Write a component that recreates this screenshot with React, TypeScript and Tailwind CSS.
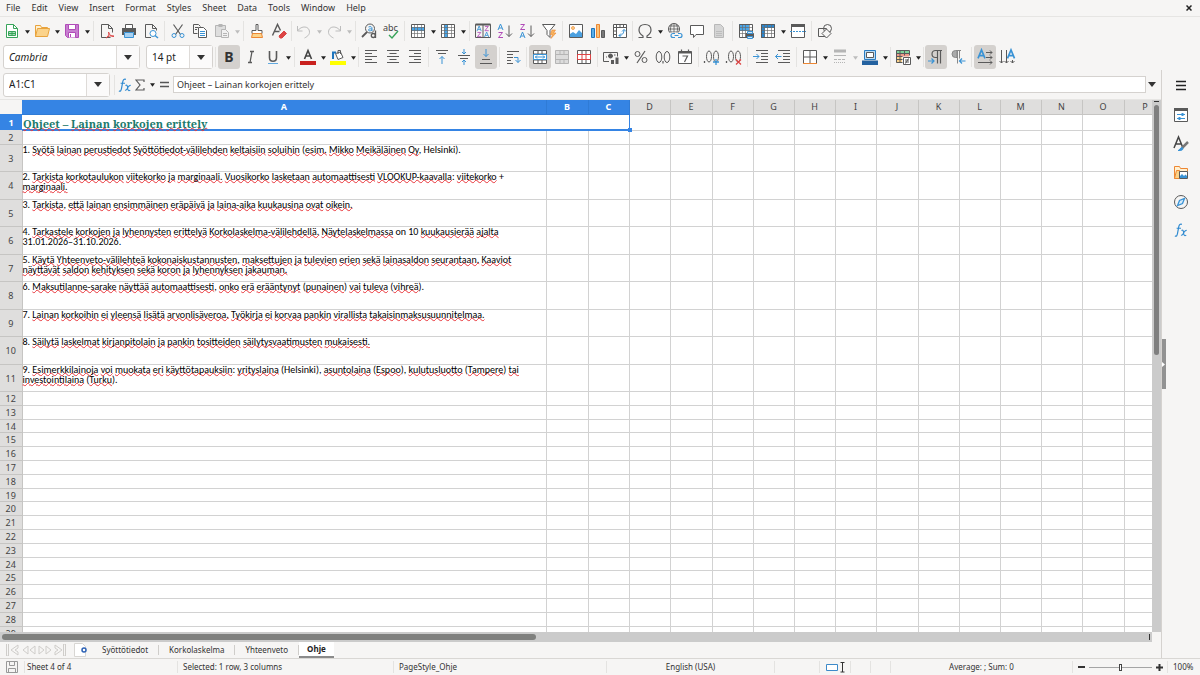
import React from "react";

type Kids = { children?: React.ReactNode };

const INK = "#5a5a5a";
const BLUE = "#3a93d5";
const RED = "#dc4444";
const ORANGE = "#ed8733";
const GREEN = "#38a45a";
const PURPLE = "#b14bb8";

function Svg({ children, size = 16 }: Kids & { size?: number }) {
  return (
    <svg width={size} height={size} viewBox="0 0 16 16" fill="none" stroke={INK} strokeWidth="1" aria-hidden="true" className="shrink-0 overflow-visible">
      {children}
    </svg>
  );
}

function Letter({ x, y, size, fill, children, bold }: { x: number; y: number; size: number; fill: string; children: string; bold?: boolean }) {
  return (
    <text x={x} y={y} fontSize={size} fill={fill} stroke="none" fontWeight={bold ? 700 : 400} fontFamily="'Noto Sans', sans-serif">
      {children}
    </text>
  );
}

function Peak({ x, y, scale = 1 }: { x: number; y: number; scale?: number }) {
  return <path transform={`translate(${x} ${y}) scale(${scale})`} d="M0 6L2.500 0 5 6M1 4h3" stroke={BLUE} strokeWidth={scale > 1.200 ? 1.200 : 1} />;
}

function Zig({ x, y }: { x: number; y: number }) {
  return <path transform={`translate(${x} ${y})`} d="M.5.500h4L.5 5.500H5" stroke={PURPLE} />;
}

const GridLines = () => (
  <>
    <path d="M4.500 1.500v13M7.500 1.500v13M11.500 1.500v13M1.500 4.500h13M1.500 7.500h13M1.500 10.500h13" stroke="#6a6a6a" strokeOpacity=".65" />
    <path d="M1.500 1.500h13v13h-13z" />
  </>
);

const icons: Record<string, React.ReactNode> = {
  New: (
    <Svg>
      <path d="M2.500 1.500h7l4 4v9h-11z" fill="#fff" stroke={GREEN} />
      <path d="M9.500 1.500v4h4" stroke={GREEN} />
      <path d="M4.500 8.500h7v4h-7zM4.500 10.500h7M8 8.500v4" stroke={GREEN} fill="#a8dfb8" />
    </Svg>
  ),
  Open: (
    <Svg>
      <path d="M1.500 13.500v-11h5l1 2h6v2" fill="#fff0d0" stroke="#e8a33d" />
      <path d="M1.500 13.500l2-8h12l-2 8z" fill="#fbd38b" stroke="#e8a33d" />
    </Svg>
  ),
  Save: (
    <Svg>
      <path d="M1.500 1.500h13v13h-11l-2-2z" fill="#c77fd0" stroke={PURPLE} />
      <path d="M4.500 1.500h7v5h-7zM4.500 14.500v-5h7v5" fill="#fff" stroke={PURPLE} />
      <path d="M6.500 11v3" stroke={PURPLE} />
    </Svg>
  ),
  "Export as PDF": (
    <Svg>
      <path d="M11.500 14.500h-9v-13h7l4 4v4M9.500 1.500v4h4" />
      <path d="M7 15c3-2 3-4 2.500-6M9.500 9c1 3 2.500 4.500 5.500 4.500M7 15c2-2 4.500-2.500 8-2" stroke={RED} />
    </Svg>
  ),
  Print: (
    <Svg>
      <path d="M4.500 1.500h7v4h-7z" fill="#fff" />
      <path d="M1 5h14v7h-2v-3H3v3H1z" fill={INK} stroke="none" />
      <path d="M3.500 9.500h9v5h-9z" fill="#a9d2f2" stroke={BLUE} />
    </Svg>
  ),
  "Print Preview": (
    <Svg>
      <path d="M8 14.500h-5.500v-13h7l4 4v2M9.500 1.500v4h4" />
      <circle cx="10" cy="10.500" r="3" stroke={BLUE} fill="#fff" />
      <path d="M12 12.500l3 2.500" stroke={BLUE} strokeWidth="1.500" />
    </Svg>
  ),
  Cut: (
    <Svg>
      <path d="M3.500 1.500l7 10M12.500 1.500l-7 10" strokeWidth="1.200" />
      <circle cx="4" cy="12.500" r="2" stroke={BLUE} />
      <circle cx="12" cy="12.500" r="2" stroke={BLUE} />
    </Svg>
  ),
  Copy: (
    <Svg>
      <path d="M5.500 10.500h-4v-9h5l2 2M3 4.500h3M3 6.500h2" />
      <path d="M6.500 4.500h5l3 3v7h-8z" fill="#fff" />
      <path d="M8 8.500h5M8 10.500h5M8 12.500h5" stroke={BLUE} />
    </Svg>
  ),
  Paste: (
    <Svg>
      <path d="M1.500 2.500h10v11h-10z" fill="#dedede" stroke="#b5b5b5" />
      <path d="M4.500 1h4v3h-4z" fill="#b5b5b5" stroke="none" />
      <path d="M7.500 6.500h4l3 3v5h-7zM9 10.500h4M9 12.500h4" fill="#f1f1f1" stroke="#b5b5b5" />
    </Svg>
  ),
  "Clone Formatting": (
    <Svg>
      <path d="M7 1.500h2v6h4v3H3v-3h4z" fill="#fff" />
      <path d="M3.500 10.500h9l1 4h-11z" fill="#fbd38b" stroke={ORANGE} />
    </Svg>
  ),
  "Clear Formatting": (
    <Svg>
      <path d="M1.500 12.500l5-11 3 6M3.500 8.500h5" strokeWidth="1.400" />
      <path d="M8 13l5-5 2.500 2.500-4.500 4.500h-2z" fill={RED} stroke={RED} />
    </Svg>
  ),
  Undo: (
    <Svg>
      <path d="M1.500 3v5h5M1.500 8c4-6 12-5 12 1 0 2-1 4-5 6" stroke="#bdbdbd" />
    </Svg>
  ),
  Redo: (
    <Svg>
      <path d="M14.500 3v5h-5M14.500 8c-4-6-12-5-12 1 0 2 1 4 5 6" stroke="#bdbdbd" />
    </Svg>
  ),
  "Find and Replace": (
    <Svg>
      <circle cx="9" cy="5.500" r="4.500" />
      <path d="M6 9l-5 5" strokeWidth="1.800" />
      <path d="M7.500 4c2.500-1 3.500 0 3.500 1.500V8M11 6c-2-.5-3.500 0-3.500 1S9 8.300 11 7" stroke={BLUE} />
      <path d="M14.500 7.500V15" strokeWidth="1.300" />
      <circle cx="12.300" cy="12.500" r="2" strokeWidth="1.300" />
    </Svg>
  ),
  Spelling: (
    <Svg>
      <Letter x={0} y={8} size={9} fill="#444">abc</Letter>
      <path d="M6 12l3 3 6-7" stroke={GREEN} strokeWidth="1.400" />
    </Svg>
  ),
  Row: (
    <Svg>
      <path d="M1 1h14v14H1z" fill="#fff" stroke="none" />
      <path d="M1 4h14v4H1z" fill="#4aa6e8" stroke="none" />
      <GridLines />
    </Svg>
  ),
  Column: (
    <Svg>
      <path d="M1 1h14v14H1z" fill="#fff" stroke="none" />
      <path d="M4 1h4v14H4z" fill="#4aa6e8" stroke="none" />
      <GridLines />
    </Svg>
  ),
  Sort: (
    <Svg>
      <path d="M.5 1.500h15v13H.5zM8 1.500v13" />
      <path d="M.5 1.500h15" strokeWidth="2" />
      <g transform="translate(2 3) scale(.85)"><Peak x={0} y={0} /></g>
      <g transform="translate(2 9) scale(.85)"><Zig x={0} y={0} /></g>
      <g transform="translate(9.500 3) scale(.85)"><Zig x={0} y={0} /></g>
      <g transform="translate(9.500 9) scale(.85)"><Peak x={0} y={0} /></g>
    </Svg>
  ),
  "Sort Ascending": (
    <Svg>
      <Peak x={1} y={1} />
      <Zig x={1} y={9} />
      <path d="M12 2.500v11M9 10.500l3 3 3-3" />
    </Svg>
  ),
  "Sort Descending": (
    <Svg>
      <Zig x={1} y={1} />
      <Peak x={1} y={9} />
      <path d="M12 2.500v11M9 10.500l3 3 3-3" />
    </Svg>
  ),
  AutoFilter: (
    <Svg>
      <path d="M1.500 1.500h12.500l-5 6v7l-3-3v-4z" fill="#fff" />
      <path d="M11 7h3.500l-2 3h2.500l-5 5.500 1.500-4H9.500z" fill="#f8b35c" stroke={ORANGE} strokeWidth=".6" />
    </Svg>
  ),
  Image: (
    <Svg>
      <path d="M1.500 1.500h13v13h-13z" fill="#fff" />
      <path d="M2 14v-3l3-2 3 2 3-4 3 3v4z" fill="#4aa0e0" stroke="none" />
      <circle cx="5" cy="5" r="1.500" fill="#fbd38b" stroke={ORANGE} strokeWidth=".7" />
    </Svg>
  ),
  Chart: (
    <Svg>
      <path d="M1.500 5.500h3v9h-3z" fill="#5aaee8" stroke="#1e75bd" />
      <path d="M6.500 1.500h3v13h-3z" fill="#f8c27a" stroke={ORANGE} />
      <path d="M11.500 7.500h3v7h-3z" fill="#777" stroke={INK} />
    </Svg>
  ),
  "Pivot Table": (
    <Svg>
      <path d="M1.500 1.500h13v13h-13z" fill="#fff" />
      <path d="M1.500 4.500h13M4.500 1.500v13M8 1.500v3M11.500 1.500v3M1.500 8h3M1.500 11.500h3" />
      <path d="M7 12.500c3 0 5-2 5-6M9 10.500l-2 2 2 2M10 8.500l2-2 2 2" stroke={BLUE} />
    </Svg>
  ),
  "Special Character": (
    <Svg>
      <path d="M1.500 14.500h4.500v-1.500c-3-2-4-4-4-6 0-3.500 2.500-5.500 6-5.500s6 2 6 5.500c0 2-1 4-4 6v1.500h4.500" strokeWidth="1.200" />
    </Svg>
  ),
  Hyperlink: (
    <Svg>
      <circle cx="7" cy="6" r="5.500" />
      <path d="M1.500 6h11M7 .5v11M5 1c-2 3-2 7 0 10M9 1c2 3 2 7 0 10M2.500 3h9M2.500 9h9" strokeWidth=".8" />
      <path d="M2.500 9.500h13.500v6.500h-13.500z" fill="#f6f5f4" stroke="none" />
      <path d="M8 10.500H6a2 2 0 000 4H8M11 10.500h2a2 2 0 010 4H11M7.500 12.500h4" stroke={BLUE} strokeWidth="1.200" />
    </Svg>
  ),
  Comment: (
    <Svg>
      <path d="M1.500 2.500h13v9H7l-2.500 3v-3h-3z" fill="#fff" />
    </Svg>
  ),
  "Headers and Footers": (
    <Svg>
      <path d="M3.500 1.500h6l3 3v10h-9z" fill="#d5d5d5" stroke="#b8b8b8" />
      <path d="M5 8.500h6M5 10.500h6M5 12.500h6" stroke="#bdbdbd" />
    </Svg>
  ),
  "Print Area": (
    <Svg>
      <path d="M1 1h14v14H1z" fill="#fff" stroke="none" />
      <path d="M1 1h10v7H1z" fill="#4aa6e8" stroke="none" />
      <GridLines />
      <path d="M8 10.500h7.500v4H8z" fill={INK} />
      <path d="M9.500 8.500h5v2h-5zM9.500 13.500h5v2h-5z" fill="#cfe6f8" stroke={BLUE} />
    </Svg>
  ),
  "Freeze Rows and Columns": (
    <Svg>
      <path d="M1 1h14v14H1z" fill="#fff" stroke="none" />
      <path d="M1 1h14v4H5v10H1z" fill="#2a86cf" stroke="none" />
      <GridLines />
    </Svg>
  ),
  "Split Window": (
    <Svg>
      <path d="M1.500 1.500h13v13h-13z" fill="#fff" />
      <path d="M1 2.500h14" strokeWidth="3" />
      <path d="M0 8.500h16" stroke={BLUE} strokeDasharray="2 1" />
    </Svg>
  ),
  Shapes: (
    <Svg>
      <path d="M1.500 5.500h8v8h-8z" />
      <circle cx="10.500" cy="5.500" r="4" />
      <path d="M9.500 6l4.500 4.500-4.500 4.500-4.500-4.500z" fill="#f6f5f4" />
    </Svg>
  ),
  Bold: <span className="text-[14px] leading-5 font-bold text-[#333]">B</span>,
  Italic: (
    <Svg>
      <path d="M7 2.500h4M5 13.500h4M9 2.500l-2 11" strokeWidth="1.300" />
    </Svg>
  ),
  Underline: (
    <Svg>
      <path d="M4.500 2v6.500c0 5 7 5 7 0V2" strokeWidth="1.600" />
      <path d="M3 14.500h10" stroke="#62a9df" />
    </Svg>
  ),
  "Font Color": (
    <Svg>
      <path d="M4.500 10l3.500-8.500L11.500 10M5.800 7h4.400" strokeWidth="1.600" stroke="#444" />
      <path d="M0 12h16v4H0z" fill="#c9211e" stroke="none" />
    </Svg>
  ),
  "Highlight Color": (
    <Svg>
      <path d="M5.500 4.500l5-1.500 2.500 5.500-5 2z" fill="#fff" />
      <path d="M8 5V1.500h2.500V5" />
      <path d="M6 3.500H3V10" stroke="#1e75bd" strokeWidth="2" />
      <path d="M0 12h16v4H0z" fill="#ffff00" stroke="none" />
    </Svg>
  ),
  "Align Left": <Svg><path d="M2 1.500h12M2 4.500h7M2 7.500h12M2 10.500h7M2 13.500h12" /></Svg>,
  "Center Horizontally": <Svg><path d="M2 1.500h12M4.500 4.500h7M2 7.500h12M4.500 10.500h7M2 13.500h12" /></Svg>,
  "Align Right": <Svg><path d="M2 1.500h12M7 4.500h7M2 7.500h12M7 10.500h7M2 13.500h12" /></Svg>,
  "Align Top": (
    <Svg>
      <path d="M2 1.500h12M4 4.500h8" />
      <path d="M8 15V7.500M5.500 10L8 7.500l2.500 2.500" stroke={BLUE} />
    </Svg>
  ),
  "Center Vertically": (
    <Svg>
      <path d="M2 6.500h12M4 9.500h8" />
      <path d="M8 0v5M6 3l2 2 2-2M8 16v-5M6 13l2-2 2 2" stroke={BLUE} />
    </Svg>
  ),
  "Align Bottom": (
    <Svg>
      <path d="M4 10.500h8M2 14.500h12" />
      <path d="M8 0v7.500M5.500 5L8 7.500 10.500 5" stroke={BLUE} />
    </Svg>
  ),
  "Wrap Text": (
    <Svg>
      <path d="M2 2.500h12M2 5.500h6M2 8.500h6M2 11.500h4M2 14.500h6" />
      <path d="M9 8.500h4v5M10.500 11l2.500 2.500 2.500-2.500" stroke={BLUE} />
    </Svg>
  ),
  "Merge and Center Cells": (
    <Svg>
      <path d="M1.500 1.500h13v13h-13z" fill="#fff" />
      <path d="M1.500 5h13M1.500 11h13M6 1.500v3.500M10 1.500v3.500M6 11v3.500M10 11v3.500" />
      <path d="M1.500 5.500h13v5h-13z" fill="#fff" stroke={BLUE} />
      <path d="M3 8h10M5 6.500L3.500 8 5 9.500M11 6.500L12.500 8 11 9.500" stroke={BLUE} />
    </Svg>
  ),
  "Merge Cells": (
    <Svg>
      <path d="M1.500 1.500h13v13h-13zM1.500 5.500h13M1.500 10.500h13M6 1.500v4M10 1.500v4M6 10.500v4M10 10.500v4" fill="#dcdcdc" stroke="#b5b5b5" />
    </Svg>
  ),
  "Split Cells": (
    <Svg>
      <path d="M1.500 1.500h13v13h-13z" fill="#fff" />
      <path d="M6 1.500v4M10 1.500v4M6 10.500v4M10 10.500v4" />
      <path d="M1.500 5.500h13v5h-13zM6 5.500v5M10 5.500v5" stroke={RED} />
    </Svg>
  ),
  Currency: (
    <Svg>
      <path d="M6 12.500H.5v-9h14v4" />
      <circle cx="7.500" cy="7" r="2" fill={INK} />
      <path d="M3 8h1M11 6h1.500" />
      <path d="M8 11h3v4H8zM12.500 8.500h3V15h-3z" fill={INK} stroke="none" />
    </Svg>
  ),
  Percent: (
    <Svg>
      <circle cx="4.500" cy="5" r="2.500" />
      <circle cx="11.500" cy="11" r="2.500" />
      <path d="M12 2L4 14" strokeWidth="1.200" />
    </Svg>
  ),
  Number: (
    <Svg>
      <ellipse cx="4" cy="8" rx="2.800" ry="5.500" />
      <ellipse cx="12" cy="8" rx="2.800" ry="5.500" />
      <path d="M8 12v2.500" strokeWidth="1.200" />
    </Svg>
  ),
  Date: (
    <Svg>
      <path d="M1.500 2.500h13v12h-13z" fill="#fff" />
      <path d="M1.500 3.500h13" strokeWidth="2" />
      <path d="M4.500.5v3M11.500.5v3M5.500 7h5l-3 6" strokeWidth="1.200" />
    </Svg>
  ),
  "Add Decimal Place": (
    <Svg>
      <path d="M.5 12v2" strokeWidth="1.300" />
      <ellipse cx="5" cy="7.500" rx="2.500" ry="5.500" />
      <ellipse cx="12" cy="7.500" rx="2.500" ry="5.500" />
      <path d="M12 10v6M9 13h6" stroke={BLUE} strokeWidth="1.300" />
    </Svg>
  ),
  "Delete Decimal Place": (
    <Svg>
      <path d="M.5 12v2" strokeWidth="1.300" />
      <ellipse cx="5" cy="7.500" rx="2.500" ry="5.500" />
      <ellipse cx="12" cy="7.500" rx="2.500" ry="5.500" />
      <path d="M10 10.500l5 5M15 10.500l-5 5" stroke={RED} strokeWidth="1.200" />
    </Svg>
  ),
  "Increase Indent": (
    <Svg>
      <path d="M3 1.500h12M8 4.500h7M8 7.500h7M8 10.500h7M3 13.500h12" />
      <path d="M0 7.500h6M3.500 5L6 7.500 3.500 10" stroke={BLUE} />
    </Svg>
  ),
  "Decrease Indent": (
    <Svg>
      <path d="M3 1.500h12M8 4.500h7M8 7.500h7M8 10.500h7M3 13.500h12" />
      <path d="M6.500 7.500h-6M3 5L.5 7.500 3 10" stroke={BLUE} />
    </Svg>
  ),
  Borders: (
    <Svg>
      <path d="M1.500 1.500h13v13h-13zM8 1.500v13M1.500 8h13" fill="#fff" />
      <path d="M1 14.500h14" stroke={ORANGE} />
    </Svg>
  ),
  "Border Style": (
    <Svg>
      <path d="M2 2h12" strokeWidth="3" stroke="#b5b5b5" />
      <path d="M2 6.500h12" stroke="#b5b5b5" />
      <path d="M2 10.500h12" stroke="#b5b5b5" strokeDasharray="3 1" />
      <path d="M2 13.500h12" stroke="#b5b5b5" strokeDasharray="1 1" />
    </Svg>
  ),
  "Background Color": (
    <Svg>
      <path d="M2.500 1.500h11v9h-11z" fill="#bcdcf5" stroke="#2a7cc2" />
      <path d="M4.500 3.500h7v5h-7z" fill="#fff" />
      <path d="M0 11.500h16V16H0z" fill="#2462a0" stroke="none" />
    </Svg>
  ),
  Conditional: (
    <Svg>
      <path d="M1 1h13v3H1z" fill="#7ed39a" stroke="none" />
      <path d="M1 4h13v3.500H1z" fill="#f09a8a" stroke="none" />
      <path d="M1 8h6v6H1z" fill="#fbd38b" stroke="none" />
      <path d="M1.500 1.500h13v5M1.500 1.500v12h6M1.500 4.500h13M1.500 7.500h6M1.500 10.500h6M5 1.500v12M9.500 1.500v5" />
      <path d="M8.500 8.500h7v7h-7z" fill="#fff" />
      <path d="M10 11h4M10 13h4M13.500 9.500l-3 5" />
    </Svg>
  ),
  "Left-To-Right": (
    <Svg>
      <path d="M14 1.500H7.500a3.500 3.500 0 000 7H9M9.500 1.500v13M12.500 1.500v13" strokeWidth="1.200" />
      <path d="M0 12h5.500M3.500 9.500L6 12l-2.500 2.500" stroke={BLUE} strokeWidth="1.200" />
    </Svg>
  ),
  "Right-To-Left": (
    <Svg>
      <path d="M7 1.500H5.500a3.500 3.500 0 000 7H7z" fill="#aaa" stroke="#888" />
      <path d="M7 1.500h4M7.500 1.500v13M9.500 1.500v8" stroke="#888" />
      <path d="M15.500 12H10M12 9.500L9.500 12l2.500 2.500" stroke={BLUE} strokeWidth="1.200" />
    </Svg>
  ),
  "Text direction left to right": (
    <Svg>
      <Peak x={1} y={1} scale={1.400} />
      <path d="M9 3.500h6M9 8.500h6M1 13.500h14M13 1.500l2 2-2 2M13 6.500l2 2-2 2M13 11.500l2 2-2 2" />
    </Svg>
  ),
  "Text direction top to bottom": (
    <Svg>
      <Peak x={8.500} y={1} scale={1.400} />
      <path d="M2.500 1v13M7.500 1v13M13.500 11v3M.5 12l2 2 2-2M5.500 12l2 2 2-2M11.500 12l2 2 2-2" />
    </Svg>
  ),
};

function Arrow({ dim }: { dim?: boolean }) {
  return (
    <svg width="5" height="4" viewBox="0 0 6 4" aria-hidden="true">
      <path d="M0 0h6L3 4z" fill={dim ? "#bdbdbd" : "#222"} />
    </svg>
  );
}

function BigArrow() {
  return (
    <svg width="8" height="5" viewBox="0 0 8 5" aria-hidden="true">
      <path d="M0 0h8L4 5z" fill="#333" />
    </svg>
  );
}

// "|" separator, "'" narrow separator, "name" button, "name+" button with menu,
// leading "!" is a pressed button and leading "~" a disabled one.
const standardBar = [
  "New+", "Open+", "Save+", "|", "Export as PDF", "Print", "Print Preview", "|", "Cut", "Copy", "~Paste+", "|",
  "Clone Formatting", "Clear Formatting", "'", "~Undo+", "~Redo+", "|", "Find and Replace", "Spelling", "|",
  "Row+", "Column+", "|", "Sort", "Sort Ascending", "Sort Descending", "AutoFilter", "|", "Image", "Chart",
  "Pivot Table", "'", "Special Character+", "Hyperlink", "Comment", "~Headers and Footers", "|", "Print Area",
  "Freeze Rows and Columns+", "Split Window", "|", "Shapes",
];

const formattingBar = [
  "!Bold", "Italic", "Underline+", "|", "Font Color+", "Highlight Color+", "'", "Align Left", "Center Horizontally",
  "Align Right", "|", "Align Top", "Center Vertically", "!Align Bottom", "|", "Wrap Text", "|",
  "!Merge and Center Cells", "~Merge Cells", "Split Cells", "|", "Currency+", "Percent", "Number", "Date", "|",
  "Add Decimal Place", "Delete Decimal Place", "|", "Increase Indent", "Decrease Indent", "|", "Borders+",
  "~Border Style+", "Background Color+", "'", "Conditional+", "'", "!Left-To-Right", "Right-To-Left", "|",
  "!Text direction left to right", "Text direction top to bottom",
];

function Tools({ items }: { items: string[] }) {
  return (
    <>
      {items.map((raw, i) => {
        if (raw === "|") return <span key={i} className="flex h-5 w-[5px] shrink-0 justify-center"><i className="w-px bg-[#e4e3e1]" /></span>;
        if (raw === "'") return <span key={i} className="flex h-5 w-[3px] shrink-0 justify-center"><i className="w-px bg-[#e4e3e1]" /></span>;
        const pressed = raw.startsWith("!");
        const dim = raw.startsWith("~");
        const name = raw.replace(/^[!~]/, "").replace(/\+$/, "");
        return (
          <React.Fragment key={i}>
            <button
              aria-label={name}
              aria-pressed={pressed || undefined}
              disabled={dim}
              className={
                pressed
                  ? "flex h-6 w-[22px] shrink-0 items-center justify-center rounded-[3px] bg-[#d4d1ce]"
                  : "flex h-6 w-[22px] shrink-0 items-center justify-center rounded-[3px]"
              }
            >
              {icons[name]}
            </button>
            {raw.endsWith("+") && (
              <button aria-label={`${name} options`} disabled={dim} className="flex h-6 w-2 shrink-0 items-center justify-center pt-[2px]">
                <Arrow dim={dim} />
              </button>
            )}
          </React.Fragment>
        );
      })}
    </>
  );
}

function Combo({ label, value, width, italic }: { label: string; value: string; width: string; italic?: boolean }) {
  return (
    <div className={`${width} flex h-6 shrink-0 rounded-[3px] border border-[#d5d2cf] bg-white`}>
      <input
        aria-label={label}
        defaultValue={value}
        className={italic ? "min-w-0 flex-1 bg-transparent px-[5px] text-[10px] text-[#222] italic outline-none" : "min-w-0 flex-1 bg-transparent px-[5px] text-[10px] text-[#222] outline-none"}
      />
      <button aria-label={`${label} list`} className="flex w-[23px] items-center justify-center border-l border-[#dedbd8] bg-[#fbfafa]">
        <BigArrow />
      </button>
    </div>
  );
}

const columns: [string, number][] = [
  ["A", 524], ["B", 42], ["C", 41], ["D", 41], ["E", 42], ["F", 41], ["G", 41], ["H", 41], ["I", 41], ["J", 42],
  ["K", 41], ["L", 41], ["M", 41], ["N", 41], ["O", 42], ["P", 42],
];

const rowHeights = [
  16, 14, 27, 28, 27, 28, 27, 28, 27, 28, 27, 14, 14, 13, 14, 14, 14, 14, 13, 14, 14, 14, 14, 13, 14, 14, 14, 14, 14,
];

const notes: Record<number, string> = {
  3: "1. Syötä lainan perustiedot Syöttötiedot-välilehden keltaisiin soluihin (esim. Mikko Meikäläinen Oy, Helsinki).",
  4: "2. Tarkista korkotaulukon viitekorko ja marginaali. Vuosikorko lasketaan automaattisesti VLOOKUP-kaavalla: viitekorko + marginaali.",
  5: "3. Tarkista, että lainan ensimmäinen eräpäivä ja laina-aika kuukausina ovat oikein.",
  6: "4. Tarkastele korkojen ja lyhennysten erittelyä Korkolaskelma-välilehdellä. Näytelaskelmassa on 10 kuukausierää ajalta 31.01.2026–31.10.2026.",
  7: "5. Käytä Yhteenveto-välilehteä kokonaiskustannusten, maksettujen ja tulevien erien sekä lainasaldon seurantaan. Kaaviot näyttävät saldon kehityksen sekä koron ja lyhennyksen jakauman.",
  8: "6. Maksutilanne-sarake näyttää automaattisesti, onko erä erääntynyt (punainen) vai tuleva (vihreä).",
  9: "7. Lainan korkoihin ei yleensä lisätä arvonlisäveroa. Työkirja ei korvaa pankin virallista takaisinmaksusuunnitelmaa.",
  10: "8. Säilytä laskelmat kirjanpitolain ja pankin tositteiden säilytysvaatimusten mukaisesti.",
  11: "9. Esimerkkilainoja voi muokata eri käyttötapauksiin: yrityslaina (Helsinki), asuntolaina (Espoo), kulutusluotto (Tampere) tai investointilaina (Turku).",
};

const known = new Set(["Helsinki", "on"]);

function Spelled({ text }: { text: string }) {
  return (
    <>
      {text.split(/([A-Za-zÄÖäö]+(?:-[A-Za-zÄÖäö]+)*\.?)/).map((part, i) =>
        i % 2 && !known.has(part) ? (
          <span key={i} className="underline decoration-[#e8353a] decoration-wavy decoration-1 underline-offset-[-1px] [text-decoration-skip-ink:none]">
            {part}
          </span>
        ) : (
          part
        ),
      )}
    </>
  );
}

function Sheet() {
  return (
    <table className="w-max table-fixed border-collapse bg-white">
      <colgroup>
        <col className="w-[22px]" />
        {columns.map(([name, width]) => (
          <col key={name} style={{ width }} />
        ))}
      </colgroup>
      <thead>
        <tr className="h-[14px]">
          <th className="bg-[#f6f5f4] p-0" />
          {columns.map(([name], i) => (
            <th
              key={name}
              scope="col"
              className={
                i < 3
                  ? "border-r border-b border-[#2f7bd6] bg-[#3584e4] p-0 text-[9px] leading-[13px] font-bold text-white"
                  : "border-r border-b border-[#c6c5c3] bg-[#dfdedd] p-0 text-[9px] leading-[13px] font-normal text-[#444]"
              }
            >
              {name}
            </th>
          ))}
        </tr>
      </thead>
      <tbody>
        {rowHeights.map((height, r) => {
          const row = r + 1;
          return (
            <tr key={row} style={{ height }}>
              <th
                scope="row"
                className={
                  row === 1
                    ? "bg-[#3584e4] p-0 text-[9px] leading-[11px] font-bold text-white"
                    : "border-r border-b border-[#c6c5c3] bg-[#dfdedd] p-0 pt-px text-[9px] leading-[11px] font-normal text-[#444]"
                }
              >
                {row}
              </th>
              {row === 1 && (
                <td colSpan={3} className="relative border-r border-b-2 border-[#3584e4] p-0 align-top font-['Noto_Serif','DejaVu_Serif_Condensed','DejaVu_Serif',serif] text-[11px] font-bold whitespace-nowrap text-[#1b7a6c]">
                  <div className="h-[13px] pl-px leading-[17px]">
                    <Spelled text="Ohjeet – Lainan korkojen erittely" />
                  </div>
                  <span className="absolute -right-[3px] -bottom-[3px] size-1 bg-[#3584e4]" />
                </td>
              )}
              {columns.slice(row === 1 ? 3 : 0).map(([name]) => (
                <td key={name} className="border-r border-b border-[#d2d2d2] p-0 align-top font-[Carlito,Lato,sans-serif] text-[10px] leading-[10px] text-black">
                  {name === "A" && notes[row] ? <Spelled text={notes[row]} /> : null}
                </td>
              ))}
            </tr>
          );
        })}
      </tbody>
    </table>
  );
}

function FxIcon() {
  return (
    <Svg size={14}>
      <path d="M1 15c2 .5 2.500-.5 3-3L5.500 4C6 1.500 7 1 9 1.500M3 6h5" stroke="#2f8ad0" strokeWidth="1.400" />
      <path d="M8.500 8.500c2-1 2 0 2.500 3s1 3.500 3 2.500M14.500 8.500c-2-.5-2.500 1-3.500 3s-1.500 3-3 2.500" stroke="#2f8ad0" strokeWidth="1.200" />
    </Svg>
  );
}

const sidebar: [string, React.ReactNode][] = [
  ["Sidebar Settings", <Svg><path d="M3 3.500h10M3 7.500h10M3 11.500h10" stroke="#222" strokeWidth="1.500" /></Svg>],
  ["Properties", <Svg><path d="M1.500 1.500h13v13h-13z" fill="#fff" /><path d="M1 2.500h14" strokeWidth="3" /><path d="M4 7.500h8M4 11.500h8" stroke={BLUE} /><path d="M9.500 6v3M6.500 10v3" stroke={BLUE} strokeWidth="2" /></Svg>],
  ["Styles", <Svg><path d="M1 12l4.500-11L10 12M3 8h5" strokeWidth="1.500" stroke="#444" /><path d="M15 6l-6 6" strokeWidth="2.500" stroke="#777" /><path d="M5 14.500c2 0 2-3 4-3 2 1 1 3.500-4 3z" fill={BLUE} stroke={BLUE} /></Svg>],
  ["Gallery", <Svg><path d="M1.500 13.500v-12h5l1 2h7v3" fill="#fff0d0" stroke={ORANGE} /><path d="M1.500 13.500l2-8h3v8z" fill="#fbd38b" stroke={ORANGE} /><path d="M6.500 6.500h8v7h-8z" fill="#fff" /><path d="M7 13v-2l2-2 2 2 1.500-1.500L14 11v2z" fill={BLUE} stroke="none" /></Svg>],
  ["Navigator", <Svg><circle cx="8" cy="8" r="6.500" /><path d="M11.500 4.500l-2 5-5 2 2-5z" fill="#d7ebfa" stroke={BLUE} strokeWidth="1.300" /></Svg>],
  ["Functions", <FxIcon />],
];

const tabs = ["Syöttötiedot", "Korkolaskelma", "Yhteenveto", "Ohje"];

export default function App() {
  return (
    <div className="flex h-screen flex-col overflow-hidden bg-[#f6f5f4] font-['Noto_Sans',sans-serif] text-[#333]">
      <header className="flex h-[17px] shrink-0 items-center border-b border-[#e6e5e3] pl-[6px] text-[9px] leading-3">
        <nav className="flex flex-1 gap-[11px]">
          {["File", "Edit", "View", "Insert", "Format", "Styles", "Sheet", "Data", "Tools", "Window", "Help"].map((m) => (
            <button key={m}>{m}</button>
          ))}
        </nav>
        <button aria-label="Close document" className="flex w-[22px] items-center justify-center">
          <svg width="6" height="6" viewBox="0 0 6 6" stroke="#222" strokeWidth="1.500" aria-hidden="true">
            <path d="M.5.5l5 5M5.500.5l-5 5" />
          </svg>
        </button>
      </header>

      <div role="toolbar" aria-label="Standard" className="flex h-[27px] shrink-0 items-center pl-px">
        <Tools items={standardBar} />
      </div>
      <div role="toolbar" aria-label="Formatting" className="flex h-[26px] shrink-0 items-center pl-[3px]">
        <Combo label="Font Name" value="Cambria" width="w-[137px]" italic />
        <span className="w-[6px] shrink-0" />
        <Combo label="Font Size" value="14 pt" width="w-[67px]" />
        <span className="flex h-5 w-[5px] shrink-0 justify-center"><i className="w-px bg-[#e4e3e1]" /></span>
        <Tools items={formattingBar} />
      </div>

      <div className="flex min-h-0 flex-1">
        <main className="flex min-w-0 flex-1 flex-col">
          <div className="flex h-[30px] shrink-0 items-center border-b border-[#e6e5e3] pl-[3px]">
            <Combo label="Name Box" value="A1:C1" width="w-[107px]" />
            <span className="flex h-5 w-2 shrink-0 justify-center"><i className="w-px bg-[#e4e3e1]" /></span>
            <button aria-label="Function Wizard" className="flex w-[14px] shrink-0 justify-center"><FxIcon /></button>
            <button aria-label="Select Function" className="flex w-4 shrink-0 justify-center">
              <svg width="10" height="12" viewBox="0 0 10 12" fill="none" stroke={INK} strokeWidth="1.200" aria-hidden="true">
                <path d="M9 3V1H1l4 5-4 5h8V9" />
              </svg>
            </button>
            <button aria-label="Select Function options" className="flex w-2 shrink-0 justify-center"><Arrow /></button>
            <button aria-label="Formula" className="flex w-[17px] shrink-0 justify-center">
              <svg width="9" height="7" viewBox="0 0 9 7" stroke="#555" strokeWidth="1.500" aria-hidden="true">
                <path d="M0 1.500h9M0 5.500h9" />
              </svg>
            </button>
            <input
              aria-label="Input line"
              defaultValue="Ohjeet – Lainan korkojen erittely"
              className="h-[17px] min-w-0 flex-1 border border-[#d5d2cf] bg-white px-[3px] text-[9px] text-[#333] outline-none"
            />
            <button aria-label="Expand Formula Bar" className="flex w-[15px] shrink-0 pl-[2px]"><BigArrow /></button>
          </div>

          <div className="flex min-h-0 flex-1">
            <div className="min-w-0 flex-1 overflow-hidden"><Sheet /></div>
            <div className="flex w-[9px] shrink-0 flex-col items-center bg-[#cbcbcb]">
              <span className="mt-px h-px w-[5px] shrink-0 bg-[#333]" />
              <span className="mt-[3px] h-[47%] w-[5px] rounded-full bg-[#7f7f7f]" />
            </div>
          </div>
          <div className="flex h-[10px] shrink-0 pr-[9px]">
            <div className="flex flex-1 items-center justify-between bg-[#cbcbcb] px-[2px]">
              <span className="h-[6px] w-[46.500%] rounded-full bg-[#7f807e]" />
              <span className="h-[6px] w-px bg-[#333]" />
            </div>
          </div>

          <div className="flex h-4 shrink-0 items-center text-[8px] leading-3">
            <svg width="66" height="12" viewBox="0 0 66 12" fill="none" stroke="#cfcdca" className="ml-1 shrink-0" aria-hidden="true">
              <path d="M2.500 0v12M4.500 0v12H2.500M14 1L7 6l7 5V8L11 6l3-2zM24 2l-5 4 5 4zM31 2l-5 4 5 4zM35 2l5 4-5 4zM42 2l5 4-5 4zM51 1l7 5-7 5V8l3-2-3-2zM59.500 0v12h2V0z" />
            </svg>
            <button aria-label="Add Sheet" className="flex w-[22px] shrink-0 items-center justify-center">
              <svg width="14" height="14" viewBox="0 0 14 14" fill="none" aria-hidden="true">
                <path d="M.5.500h8l3 3v10H.5z" fill="#fff" stroke="#d8d6d3" />
                <circle cx="10" cy="7" r="2" fill="#fff" stroke="#2d62b5" strokeWidth="1.500" />
              </svg>
            </button>
            {tabs.map((t) => (
              <button
                key={t}
                className={
                  t === "Ohje"
                    ? "h-4 border-b-2 border-[#8b8b8b] bg-white px-2 font-bold text-[#222]"
                    : "flex h-4 items-center"
                }
              >
                {t === "Ohje" ? t : <span className="h-[10px] border-r border-[#cfcdca] px-[10px] leading-[10px]">{t}</span>}
              </button>
            ))}
          </div>
        </main>

        <aside className="flex w-[39px] shrink-0">
          <div className="flex w-1 flex-col justify-center border-l border-[#d5d2cf]">
            <button aria-label="Hide sidebar" className="flex h-[50px] w-1 items-center bg-[#929292]">
              <svg width="4" height="5" viewBox="0 0 4 5" aria-hidden="true"><path d="M0 0l3 2.500L0 5z" fill="#fff" /></svg>
            </button>
          </div>
          <nav className="flex flex-1 flex-col items-center gap-[13px] pt-2 pr-1">
            {sidebar.map(([name, icon]) => (
              <button key={name} aria-label={name}>{icon}</button>
            ))}
          </nav>
        </aside>
      </div>

      <footer className="flex h-[17px] shrink-0 items-center border-t border-[#d9d7d4] text-[8px] leading-3">
        <span className="flex w-6 shrink-0 justify-center">
          <svg width="12" height="12" viewBox="0 0 12 12" fill="none" stroke="#999" aria-hidden="true">
            <path d="M.5.500h11v11H.5zM3.500.500v4h5v-4M2.500 11.500v-4h7v4" />
          </svg>
        </span>
        <span className="w-[153px] shrink-0 border-l border-[#e4e3e1] pl-[2px]">Sheet 4 of 4</span>
        <span className="w-[216px] shrink-0 border-l border-[#e4e3e1] pl-[5px]">Selected: 1 row, 3 columns</span>
        <span className="min-w-0 flex-1 border-l border-[#e4e3e1] pl-[5px]">PageStyle_Ohje</span>
        <span className="w-[168px] shrink-0 border-l border-[#e4e3e1] text-center">English (USA)</span>
        <span className="h-3 w-[45px] shrink-0 border-l border-[#e4e3e1]" />
        <span className="flex w-[31px] shrink-0 items-center border-l border-[#e4e3e1] pl-[6px]">
          <svg width="22" height="12" viewBox="0 0 22 12" fill="none" className="shrink-0" aria-hidden="true">
            <path d="M.5 3.500h11v6H.5z" stroke="#3d8ac9" fill="#fff" />
            <path d="M14.500 1.500h4M14.500 11h4M16.500 1.500v9.500" stroke="#333" />
          </svg>
        </span>
        <span className="h-3 w-5 shrink-0 border-l border-[#e4e3e1]" />
        <span className="h-3 w-5 shrink-0 border-l border-[#e4e3e1]" />
        <span className="w-[182px] shrink-0 border-l border-[#e4e3e1] text-center">Average: ; Sum: 0</span>
        <span className="flex w-[95px] shrink-0 items-center border-l border-[#e4e3e1] pl-[5px]">
          <button aria-label="Zoom out" className="flex h-3 w-[7px] items-center"><i className="h-[2px] w-full bg-[#333]" /></button>
          <input
            aria-label="Zoom"
            type="range"
            defaultValue={50}
            className="mx-1 h-3 min-w-0 flex-1 appearance-none bg-[linear-gradient(#a5a5a5,#a5a5a5)] bg-[length:100%_1px] bg-center bg-no-repeat [&::-webkit-slider-thumb]:h-[7px] [&::-webkit-slider-thumb]:w-[3px] [&::-webkit-slider-thumb]:appearance-none [&::-webkit-slider-thumb]:border [&::-webkit-slider-thumb]:border-[#444] [&::-webkit-slider-thumb]:bg-white"
          />
          <button aria-label="Zoom in" className="mr-1 flex w-[7px] items-center">
            <svg width="7" height="7" viewBox="0 0 7 7" stroke="#333" strokeWidth="2" aria-hidden="true"><path d="M0 3.500h7M3.500 0v7" /></svg>
          </button>
        </span>
        <span className="w-[33px] shrink-0 border-l border-[#e4e3e1] pl-[5px]">100%</span>
      </footer>
    </div>
  );
}
